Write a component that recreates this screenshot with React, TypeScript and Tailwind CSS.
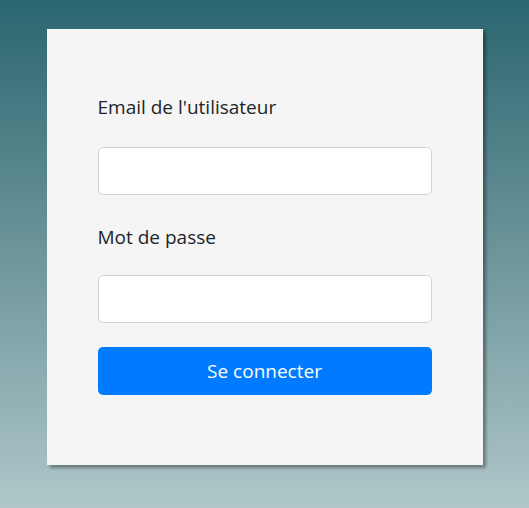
export default function App() {
  return (
    <div
      className="min-h-[508px] w-full bg-gradient-to-b from-[#296670] to-[#afc7c9] pt-[29px]"
      style={{ fontFamily: '"Open Sans", "Noto Sans", sans-serif' }}
    >
      <div className="mx-auto w-[436px] h-[436px] bg-[#f5f5f5] shadow-[3px_3px_3px_rgba(0,0,0,0.35)] px-[51px] pt-[63px]">
        <form
          className="flex flex-col"
          onSubmit={(e) => e.preventDefault()}
        >
          <label className="block h-[30px] text-[19px] leading-[30px] text-[#212529]">
            Email de l'utilisateur
          </label>
          <input
            type="email"
            className="mt-[25px] h-[48px] w-full rounded-[5px] border border-[#ced4da] bg-white px-3 outline-none"
          />
          <label className="mt-[27px] block h-[30px] text-[19px] leading-[30px] text-[#212529]">
            Mot de passe
          </label>
          <input
            type="password"
            className="mt-[23px] h-[48px] w-full rounded-[5px] border border-[#ced4da] bg-white px-3 outline-none"
          />
          <button
            type="submit"
            className="mt-[24px] h-[48px] w-full rounded-[5px] bg-[#007bff] text-[19px] text-white"
          >
            Se connecter
          </button>
        </form>
      </div>
    </div>
  );
}
